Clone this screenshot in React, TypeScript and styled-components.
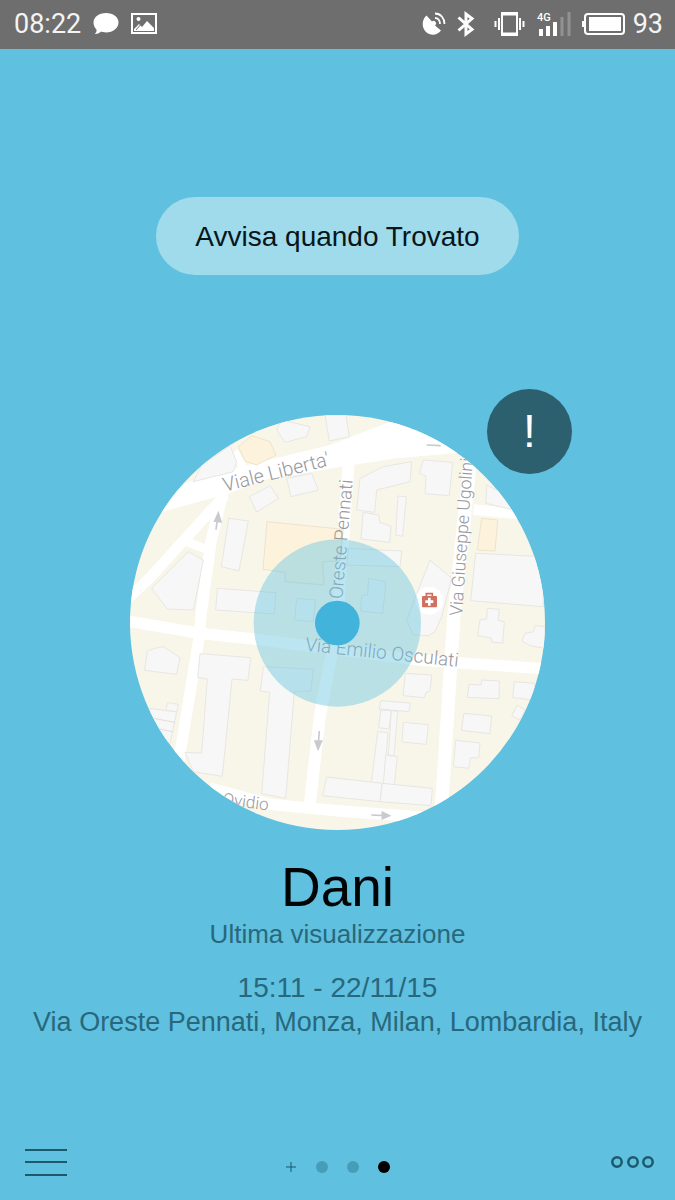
import React from 'react';
import styled, { createGlobalStyle } from 'styled-components';

const GlobalStyle = createGlobalStyle`
  *, *::before, *::after { box-sizing: border-box; }
  body { margin: 0; background: #5fc0df; }
  button { font: inherit; color: inherit; border: 0; padding: 0; background: none; cursor: pointer; }
`;

const Screen = styled.div`
  display: flex;
  flex-direction: column;
  min-height: 100vh;
  background: #5fc0df;
  color: #28687c;
  font-family: 'Liberation Sans', Arial, sans-serif;
`;

const StatusBar = styled.header`
  display: flex;
  align-items: center;
  justify-content: space-between;
  height: 49px;
  padding: 0 12px 2px 14px;
  background: #6e6e6e;
  color: #f4f4f4;
  font-family: Roboto, sans-serif;
  font-size: 27px;
  line-height: 32px;
`;

const StatusGroup = styled.div<{ $gap: number }>`
  display: flex;
  align-items: center;
  gap: ${({ $gap }) => $gap}px;
`;

const Icon = styled.svg`
  display: block;
  flex: none;
`;

const Main = styled.main`
  display: flex;
  flex: 1;
  flex-direction: column;
  align-items: center;
  padding: 148px 16px 0;
`;

const NotifyButton = styled.button`
  height: 78px;
  padding: 2px 39px 0;
  border-radius: 39px;
  background: #a0dbeb;
  color: #07161b;
  font-size: 28px;
  line-height: 32px;
  white-space: nowrap;
`;

const MapFrame = styled.section`
  position: relative;
  width: 415px;
  max-width: 100%;
  margin-top: 140px;
`;

const MapDrawing = styled.svg`
  display: block;
  width: 100%;
  border-radius: 50%;
`;

const AlertBadge = styled.button`
  position: absolute;
  top: -26px;
  right: -27px;
  width: 85px;
  height: 85px;
  border-radius: 50%;
  background: #2d606e;
  color: #fff;
  font-size: 46px;
  line-height: 85px;
`;

const Details = styled.section`
  display: flex;
  flex-direction: column;
  align-items: center;
  margin-top: 27px;
  text-align: center;
`;

const Name = styled.h1`
  margin: 0;
  color: #020506;
  font-size: 55px;
  font-weight: 400;
  line-height: 60px;
`;

const Line = styled.p<{ $size: number; $spaced?: boolean }>`
  margin: ${({ $spaced }) => ($spaced ? '20px' : '0')} 0 0;
  font-size: ${({ $size }) => $size}px;
  line-height: 34px;
`;

const Footer = styled.footer`
  display: grid;
  grid-template-columns: 1fr auto 1fr;
  align-items: center;
  padding: 0 20px 24px;
`;

const IconButton = styled.button<{ $end?: boolean }>`
  justify-self: ${({ $end }) => ($end ? 'end' : 'start')};
`;

const Pager = styled.nav`
  display: flex;
  align-items: center;
  gap: 19px;
  padding-top: 9px;
`;

const PageDot = styled.button<{ $active?: boolean }>`
  width: 12px;
  height: 12px;
  border-radius: 50%;
  background: ${({ $active }) => ($active ? '#000' : '#479db8')};
`;

const roads: [string, number][] = [
  ['M-10 555 L60 488 L285 240', 32],
  ['M165 378 L232 404', 26],
  ['M312 110 L345 165', 24],
  ['M278 235 L243 380 L213 600 L208 665 L145 1045', 34],
  ['M-10 618 L210 655 L370 672 L865 735 L1250 762', 34],
  ['M657 130 L620 640 L570 900 L538 1180', 36],
  ['M1024 110 L972 600 L933 1200', 40],
  ['M240 1120 L420 1168 L630 1188 L930 1210', 34],
  ['M1030 284 L1200 300', 32],
];

const buildings = [
  'M190 200 L215 150 L300 92 L320 140 L310 170 Z',
  'M440 45 L455 15 L540 35 L530 65 L465 82 Z',
  'M585 0 L598 78 L658 65 L648 0 Z',
  'M358 245 L420 212 L446 250 L380 291 Z',
  'M470 190 L545 175 L565 225 L483 245 Z',
  'M296 310 L355 318 L327 468 L274 455 Z',
  'M175 410 L220 435 L190 585 L112 582 L65 520 Z',
  'M262 520 L437 533 L433 597 L257 585 Z',
  'M500 550 L557 555 L550 620 L494 615 Z',
  'M690 190 L760 155 L845 140 L840 200 L740 225 L734 292 L680 285 Z',
  'M868 175 L880 135 L968 142 L958 242 L885 236 L888 184 Z',
  'M804 243 L829 245 L818 364 L797 360 Z',
  'M699 292 L746 300 L750 322 L783 334 L779 382 L693 372 Z',
  'M655 400 L815 408 L810 455 L650 450 Z',
  'M716 490 L767 500 L765 530 L758 595 L692 588 L695 540 L713 540 Z',
  'M900 435 L965 490 L935 605 L915 650 L895 662 L850 660 L830 615 Z',
  'M1070 210 L1130 240 L1150 285 L1068 265 Z',
  'M1037 415 L1240 425 L1240 575 L1022 557 Z',
  'M1072 580 L1108 583 L1104 616 L1123 620 L1118 684 L1085 681 L1084 669 L1043 662 L1050 614 L1070 612 Z',
  'M1185 655 L1210 650 L1215 632 L1245 635 L1245 700 L1200 692 L1176 678 Z',
  'M52 708 L75 700 L100 695 L150 728 L140 778 L44 766 Z',
  'M112 863 L145 868 L140 891 L108 886 Z',
  'M60 880 L140 891 L120 985 L60 960 Z',
  'M210 716 L362 728 L354 796 L306 792 L277 1084 L190 1070 L165 1012 L215 1014 L232 792 L203 787 Z',
  'M400 755 L550 763 L542 828 L493 830 L467 1150 L395 1136 L419 832 L391 828 Z',
  'M826 775 L905 780 L900 828 L888 832 L883 848 L819 842 Z',
  'M1055 795 L1108 798 L1107 851 L1012 847 L1017 808 L1053 810 Z',
  'M1153 800 L1215 805 L1210 855 L1148 848 Z',
  'M1162 870 L1185 885 L1170 915 L1145 902 Z',
  'M1002 895 L1085 903 L1080 956 L994 946 Z',
  'M977 976 L1050 984 L1046 1029 L1022 1028 L1016 1060 L970 1055 Z',
  'M820 922 L895 929 L889 988 L816 981 Z',
  'M752 857 L841 864 L837 890 L748 882 Z',
  'M752 885 L784 887 L777 942 L746 938 Z',
  'M784 887 L803 889 L792 1023 L775 1020 Z',
  'M743 950 L774 953 L761 1106 L724 1102 Z',
  'M767 1020 L802 1025 L793 1110 L760 1106 Z',
  'M590 1086 L757 1105 L750 1160 L578 1142 Z',
  'M757 1105 L907 1120 L903 1172 L750 1160 Z',
];

const highlights = [
  'M325 95 L365 62 L420 80 L438 120 L380 150 L345 138 Z',
  'M411 320 L640 343 L630 438 L578 440 L582 510 L465 500 L466 472 L399 463 Z',
  'M1055 310 L1103 315 L1095 408 L1042 405 Z',
];

const arrows = [
  'M258 344 L263 308 M254 318 L265 294 L273 320 Z',
  'M568 948 L565 984 M555 978 L564 1002 L575 978 Z',
  'M724 1200 L765 1202 M757 1192 L778 1202 L757 1211 Z',
  'M890 90 L932 92',
];

function LocationMap() {
  return (
    <MapDrawing viewBox="0 0 1245 1245" role="img" aria-label="Mappa della posizione">
      <rect width="1245" height="1245" fill="#f8f6e8" />
      <path d="M60 300 L165 205 L290 165 L600 90 L780 20 L960 40 L1010 112 L800 130 L615 158 L400 195 L290 238 Z" fill="#fff" />
      {roads.map(([d, w]) => (
        <path key={d} d={d} fill="none" stroke="#fff" strokeWidth={w} strokeLinejoin="round" />
      ))}
      {buildings.map((d) => (
        <path key={d} d={d} fill="#f7f7f7" stroke="#e7e6e2" strokeWidth="3" />
      ))}
      {highlights.map((d) => (
        <path key={d} d={d} fill="#fdf3dc" stroke="#efe3cb" strokeWidth="3" />
      ))}
      <path d="M60 908 L134 922 M70 938 L128 950" stroke="#e0dfdc" strokeWidth="3" />
      {arrows.map((d) => (
        <path key={d} d={d} fill="#c9c9d0" stroke="#c9c9d0" strokeWidth="5" />
      ))}
      <circle cx="898" cy="557" r="42" fill="#fff" />
      <path d="M889 544 V536 H907 V544" fill="none" stroke="#d2705f" strokeWidth="5" />
      <rect x="876" y="543" width="45" height="34" rx="3" fill="#d2705f" />
      <path d="M898 548 V572 M886 560 H910" stroke="#fff" strokeWidth="8" />
      <g fill="#98979e" fontFamily="Roboto, sans-serif" fontWeight="300">
        <text transform="translate(284 230) rotate(-14)" fontSize="59">Viale Liberta'</text>
        <text transform="translate(668 195) rotate(-85)" fontSize="56" textAnchor="end">Via Oreste Pennati</text>
        <text transform="translate(996 604) rotate(-86)" fontSize="53">Via Giuseppe Ugolini</text>
        <text transform="translate(524 707) rotate(6)" fontSize="57">Via Emilio Osculati</text>
        <text transform="translate(276 1169) rotate(7)" fontSize="51">Ovidio</text>
      </g>
      <circle cx="622" cy="624" r="251" fill="#5fc0df" fillOpacity="0.42" />
      <circle cx="622" cy="624" r="67" fill="#42b3da" />
    </MapDrawing>
  );
}

export default function App() {
  return (
    <Screen>
      <GlobalStyle />
      <StatusBar>
        <StatusGroup $gap={12}>
          <span>08:22</span>
          <Icon width="26" height="23" viewBox="0 0 26 23" fill="#fff" aria-hidden="true">
            <path d="M13 1 C20 1 25.500 5 25.500 10.500 C25.500 16 20 20.500 13 20.500 C11 20.500 9.500 20.200 8 19.600 C6.500 21.500 4 22.300 1.500 22 C3 21 3.800 19.500 3.500 17.500 C1.500 15.500 .5 13 .5 10.500 C.5 5 6 1 13 1Z" />
          </Icon>
          <Icon width="26" height="21" viewBox="0 0 26 21" aria-hidden="true">
            <rect x="1" y="1" width="24" height="19" fill="none" stroke="#fff" strokeWidth="2" />
            <circle cx="7.500" cy="6" r="2" fill="#fff" />
            <path d="M3 18 L3 16 L8 11 L11 14 L16 8 L23 15 V18Z" fill="#fff" />
            <path d="M5 17 L11 10" stroke="#6e6e6e" strokeWidth="1" />
          </Icon>
        </StatusGroup>
        <StatusGroup $gap={11}>
          <Icon width="24" height="24" viewBox="0 0 24 24" aria-hidden="true">
            <path d="M4.500 3.500 C-.5 8 -.5 15.500 4 20 C8.500 24 15.500 23.500 19 18.500 L13 13.500 A2.500 2.500 0 1 0 10 9.500Z" fill="#fff" />
            <path d="M13 6 C16 6 18 8.500 18 12 M13 1.500 C18.500 1.500 22.500 6 22.500 12" fill="none" stroke="#fff" strokeWidth="1.800" />
          </Icon>
          <Icon width="18" height="26" viewBox="0 0 18 26" fill="none" stroke="#fff" strokeWidth="3" aria-hidden="true">
            <path d="M1.500 6.500 L15 18.500 L9 23 V3 L15 7.500 L1.500 19.500" />
          </Icon>
          <Icon width="40" height="26" viewBox="-8 0 40 26" fill="none" stroke="#fff" aria-hidden="true">
            <path d="M8 2 H23 V24 H8Z" strokeWidth="2" />
            <path d="M8 3 H23 M8 23 H23" strokeWidth="3" />
            <path d="M1.500 10 V16 M5 7 V19 M26 7 V19 M29.500 10 V16" strokeWidth="2" />
          </Icon>
          <Icon width="34" height="26" viewBox="9 0 34 26" aria-hidden="true">
            <text x="9" y="10" fill="#fff" fontFamily="Roboto, sans-serif" fontSize="11" fontWeight="500">4G</text>
            <path d="M13 18 V25 M20 15 V25 M27 11 V25" stroke="#fff" strokeWidth="4" />
            <path d="M34 6 V25 M41 1 V25" stroke="#929292" strokeWidth="3" />
          </Icon>
          <StatusGroup $gap={8}>
            <Icon width="43" height="22" viewBox="0 0 43 22" aria-hidden="true">
              <rect x="3" y="1" width="39" height="20" rx="3" fill="none" stroke="#fff" strokeWidth="2" />
              <rect x="7" y="4" width="32" height="14" fill="#fff" />
              <path d="M1 8 V14" stroke="#fff" strokeWidth="2" />
            </Icon>
            <span>93</span>
          </StatusGroup>
        </StatusGroup>
      </StatusBar>

      <Main>
        <NotifyButton type="button">Avvisa quando Trovato</NotifyButton>
        <MapFrame>
          <LocationMap />
          <AlertBadge type="button">!</AlertBadge>
        </MapFrame>
        <Details>
          <Name>Dani</Name>
          <Line $size={26}>Ultima visualizzazione</Line>
          <Line $size={28} $spaced>15:11 - 22/11/15</Line>
          <Line $size={27}>Via Oreste Pennati, Monza, Milan, Lombardia, Italy</Line>
        </Details>
      </Main>

      <Footer>
        <IconButton type="button" aria-label="Menu">
          <Icon width="47" height="28" viewBox="-5 0 47 28" stroke="#1c596b" strokeWidth="2" aria-hidden="true">
            <path d="M0 2 H42 M0 14 H42 M0 27 H42" />
          </Icon>
        </IconButton>
        <Pager aria-label="Pagine">
          <IconButton type="button" aria-label="Aggiungi">
            <Icon width="12" height="12" viewBox="0 0 12 12" stroke="#1c596b" strokeWidth="1" aria-hidden="true">
              <path d="M6 1 V11 M1 6 H11" />
            </Icon>
          </IconButton>
          <PageDot type="button" aria-label="Pagina 1" />
          <PageDot type="button" aria-label="Pagina 2" />
          <PageDot type="button" aria-label="Pagina 3" $active />
        </Pager>
        <IconButton type="button" aria-label="Altro" $end>
          <Icon width="44" height="14" viewBox="0 0 44 14" fill="none" stroke="#1c596b" strokeWidth="2.500" aria-hidden="true">
            <circle cx="6" cy="7" r="4.700" />
            <circle cx="22" cy="7" r="4.700" />
            <circle cx="37" cy="7" r="4.700" />
          </Icon>
        </IconButton>
      </Footer>
    </Screen>
  );
}
